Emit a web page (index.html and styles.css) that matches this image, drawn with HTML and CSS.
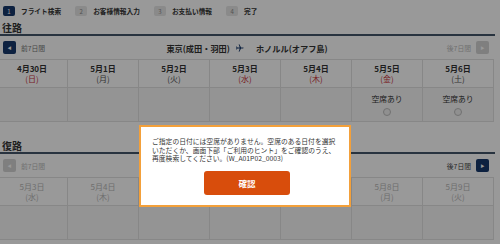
FILE: index.html
```html
<!DOCTYPE html>
<html lang="ja">
<head>
  <meta charset="UTF-8" />
  <meta name="viewport" content="width=device-width, initial-scale=1.0" />
  <title>フライト検索 - 日付選択</title>
  <link rel="stylesheet" href="styles.css">
</head>

<body>
  <div class="page">
    <ol class="steps">
      <li class="step current"><span class="num">1</span>フライト検索</li>
      <li class="step"><span class="num">2</span>お客様情報入力</li>
      <li class="step"><span class="num">3</span>お支払い情報</li>
      <li class="step"><span class="num">4</span>完了</li>
    </ol>

    <section class="leg">
      <h2 class="leg-title">往路</h2>
      <div class="leg-nav">
        <div class="nav-side">
          <span class="arrow on">&#9664;</span>
          <span class="nav-label">前7日間</span>
        </div>
        <div class="route">
          東京(成田・羽田)
          <svg class="plane" viewBox="0 0 24 24" width="10" height="10">
            <path d="M21 12.8v-1.6l-8-4.2V2.6C13 1.7 12.6 1 12 1s-1 .7-1 1.6V7l-8 4.2v1.6l8-2.4v5.3l-2.4 1.8V19l3.4-1 3.4 1v-1.5L13 15.7v-5.3z" transform="rotate(90 12 12)" />
          </svg>
          ホノルル(オアフ島)
        </div>
        <div class="nav-side">
          <span class="nav-label off">後7日間</span>
          <span class="arrow">&#9654;</span>
        </div>
      </div>
      <div class="days">
        <div class="day-head"><b>4月30日</b><span class="wd red">(日)</span></div>
        <div class="day-head"><b>5月1日</b><span class="wd">(月)</span></div>
        <div class="day-head"><b>5月2日</b><span class="wd">(火)</span></div>
        <div class="day-head"><b>5月3日</b><span class="wd red">(水)</span></div>
        <div class="day-head"><b>5月4日</b><span class="wd red">(木)</span></div>
        <div class="day-head"><b>5月5日</b><span class="wd red">(金)</span></div>
        <div class="day-head"><b>5月6日</b><span class="wd">(土)</span></div>
        <div class="day-cell"></div>
        <div class="day-cell"></div>
        <div class="day-cell"></div>
        <div class="day-cell"></div>
        <div class="day-cell"></div>
        <div class="day-cell"><span>空席あり</span><i class="radio"></i></div>
        <div class="day-cell"><span>空席あり</span><i class="radio"></i></div>
      </div>
    </section>

    <section class="leg leg-return">
      <h2 class="leg-title">復路</h2>
      <div class="leg-nav">
        <div class="nav-side">
          <span class="arrow">&#9664;</span>
          <span class="nav-label off">前7日間</span>
        </div>
        <div class="route"></div>
        <div class="nav-side">
          <span class="nav-label dark">後7日間</span>
          <span class="arrow on">&#9654;</span>
        </div>
      </div>
      <div class="days muted">
        <div class="day-head"><b>5月3日</b><span class="wd">(水)</span></div>
        <div class="day-head"><b>5月4日</b><span class="wd">(木)</span></div>
        <div class="day-head"><b>5月5日</b><span class="wd">(金)</span></div>
        <div class="day-head"><b>5月6日</b><span class="wd">(土)</span></div>
        <div class="day-head"><b>5月7日</b><span class="wd">(日)</span></div>
        <div class="day-head"><b>5月8日</b><span class="wd">(月)</span></div>
        <div class="day-head"><b>5月9日</b><span class="wd">(火)</span></div>
        <div class="day-cell"></div>
        <div class="day-cell"></div>
        <div class="day-cell"></div>
        <div class="day-cell"></div>
        <div class="day-cell"></div>
        <div class="day-cell"></div>
        <div class="day-cell"></div>
      </div>
    </section>
  </div>

  <div class="overlay"></div>

  <div class="modal">
    <p class="modal-text">ご指定の日付には空席がありません。空席のある日付を選択<br>いただくか、画面下部「ご利用のヒント」をご確認のうえ、<br>再度検索してください。(W_A01P02_0003)</p>
    <button class="modal-btn">確認</button>
  </div>
</body>
</html>
```

FILE: styles.css
```css
body {
  margin: 0;
  padding: 0;
  font-family: "Noto Sans CJK JP", "Noto Sans", sans-serif;
  background: #fff;
  color: #333;
  width: 500px;
  height: 244px;
  overflow: hidden;
}

.page {
  width: 500px;
}

/* progress steps */
.steps {
  list-style: none;
  margin: 0;
  padding: 6px 0 0 3px;
  height: 16px;
  display: flex;
  gap: 14px;
}

.step {
  display: flex;
  align-items: center;
  gap: 6px;
  height: 10px;
  font-size: 6.7px;
  font-weight: bold;
  color: #333;
}

.step .num {
  width: 12px;
  height: 10px;
  border-radius: 2px;
  background: #e6e6e6;
  color: #888;
  font-size: 6px;
  font-weight: normal;
  display: flex;
  align-items: center;
  justify-content: center;
}

.step.current .num {
  background: #17386b;
  color: #fff;
}

/* legs */
.leg-return {
  margin-top: 18px;
}

.leg-title {
  margin: 0 5px 0 0;
  padding-left: 2px;
  font-size: 10px;
  line-height: 12px;
  font-weight: bold;
  color: #333;
  border-bottom: 2px solid #44556a;
}

.leg-nav {
  display: flex;
  align-items: center;
  height: 23px;
  padding: 0 11px 0 3px;
}

.nav-side {
  display: flex;
  align-items: center;
  gap: 5px;
}

.arrow {
  width: 13px;
  height: 13px;
  border-radius: 2px;
  background: #d4d4d4;
  color: #fff;
  font-size: 4px;
  display: flex;
  align-items: center;
  justify-content: center;
}

.arrow.on {
  background: #17386b;
}

.nav-label {
  font-size: 6.8px;
  color: #777;
}

.nav-label.off {
  color: #bbb;
}

.nav-label.dark {
  color: #444;
}

.route {
  flex: 1;
  display: flex;
  align-items: center;
  justify-content: center;
  font-size: 8.2px;
  font-weight: bold;
  color: #333;
  padding-left: 2px;
}

.plane {
  fill: #17386b;
  margin: 0 12px 0 4px;
}

/* day grid */
.days {
  display: grid;
  grid-template-columns: repeat(7, 71px);
  margin-left: -3px;
  width: 497px;
  border-top: 1px solid #e2e2e2;
  border-bottom: 1px solid #e2e2e2;
}

.day-head,
.day-cell {
  border-right: 1px solid #e2e2e2;
  display: flex;
  flex-direction: column;
  align-items: center;
  text-align: center;
}

.day-head {
  height: 28px;
  padding-top: 4px;
  box-sizing: border-box;
  border-bottom: 1px solid #e2e2e2;
  background: #fff;
}

.day-head b {
  font-size: 8px;
  line-height: 10px;
  color: #333;
}

.wd {
  font-size: 8px;
  line-height: 10px;
  color: #555;
}

.wd.red {
  color: #c8343c;
}

.day-cell {
  height: 33px;
  padding-top: 5px;
  box-sizing: border-box;
  background: #f7f7f7;
}

.day-cell span {
  font-size: 7.8px;
  line-height: 12px;
  color: #333;
}

.radio {
  width: 6px;
  height: 6px;
  margin-top: 3px;
  border-radius: 50%;
  border: 1px solid #bdbdbd;
  background: #f0f0f0;
}

.days.muted .day-head b,
.days.muted .wd {
  color: #b8b8b8;
  font-weight: normal;
}

/* modal */
.overlay {
  position: fixed;
  inset: 0;
  background: rgba(0, 0, 0, 0.4);
}

.modal {
  position: absolute;
  left: 139px;
  top: 125px;
  width: 212px;
  height: 82px;
  box-sizing: border-box;
  background: #fff;
  border: 2px solid #f3a03a;
  padding: 10px 0 0 11px;
  display: flex;
  flex-direction: column;
}

.modal-text {
  margin: 0;
  font-size: 6.8px;
  line-height: 8.7px;
  color: #333;
  white-space: nowrap;
}

.modal-btn {
  align-self: flex-start;
  margin: 8px 0 0 52px;
  width: 86px;
  height: 24px;
  border: none;
  border-radius: 3px;
  background: #d84d0c;
  color: #fff;
  font-family: "Noto Sans CJK JP", sans-serif;
  font-size: 8.5px;
  font-weight: bold;
  cursor: pointer;
}
```
